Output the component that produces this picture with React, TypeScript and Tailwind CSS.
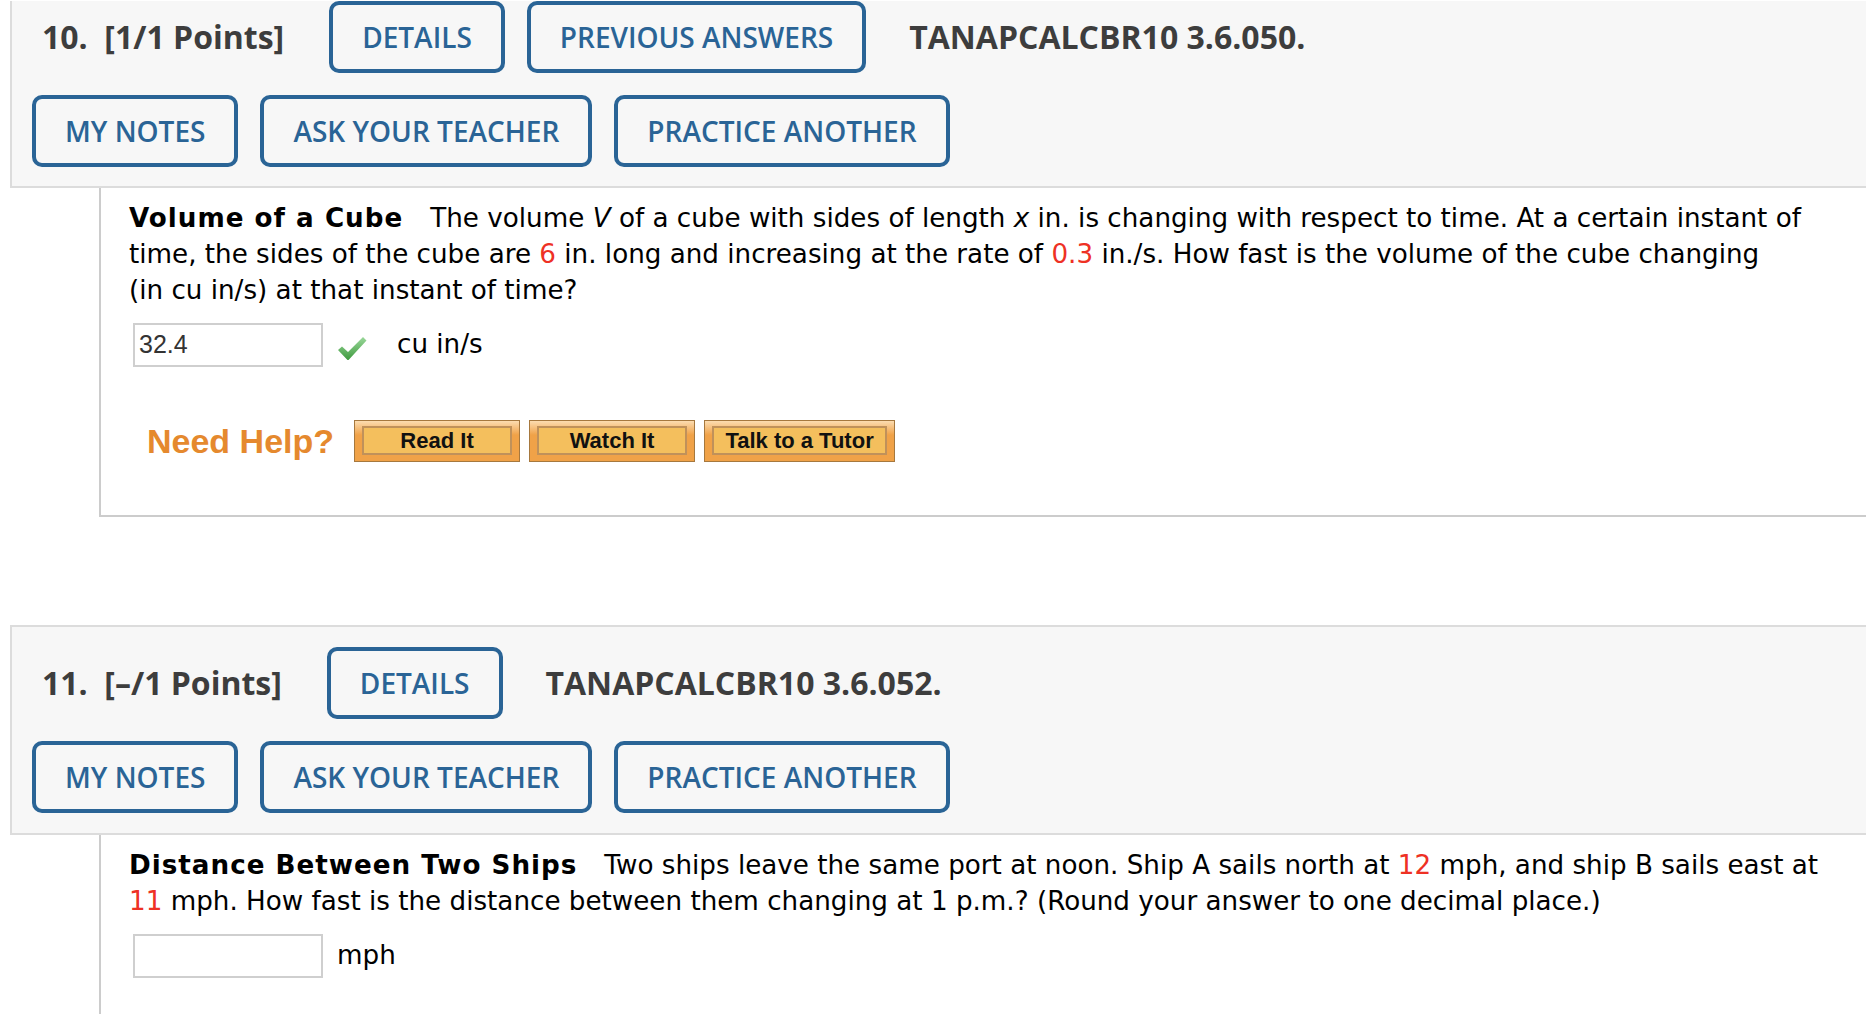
import React from "react";

const openSans = { fontFamily: '"Open Sans", "Noto Sans", sans-serif' };
const verdana = { fontFamily: '"DejaVu Sans", Verdana, sans-serif' };
const arial = { fontFamily: '"Liberation Sans", Arial, sans-serif' };

function OutlineButton({ label }: { label: string }) {
  return (
    <div className="flex h-[72px] shrink-0 items-center rounded-[10px] border-4 border-[#2a6496] px-[29px] text-[28px] font-semibold text-[#2a6496]">
      {label}
    </div>
  );
}

function HelpButton({ label, width }: { label: string; width: string }) {
  return (
    <div
      className={`${width} h-[42px] border border-[#a6783e] bg-[linear-gradient(#fcdcb0,#f0a248_35%)] px-[7px] pt-[5px] pb-[6px]`}
    >
      <div
        className="flex h-full items-center justify-center border-2 border-[#c0915a] bg-[#f4bf5d] text-[22px] font-bold text-[#111]"
        style={arial}
      >
        {label}
      </div>
    </div>
  );
}

function Check() {
  return (
    <svg width="30" height="25" viewBox="0 0 30 25">
      <defs>
        <linearGradient id="chk" x1="0" y1="0" x2="0" y2="1">
          <stop offset="0" stopColor="#9ad89a" />
          <stop offset="1" stopColor="#3f9a3f" />
        </linearGradient>
      </defs>
      <path d="M1 14 L5 10.5 L11 16 L26 1 L29.5 4.5 L12 23.5 Q11 24.5 10 23.5 Z" fill="url(#chk)" />
    </svg>
  );
}

function Header({
  num,
  points,
  code,
  prev,
  first,
}: {
  num: string;
  points: string;
  code: string;
  prev?: boolean;
  first?: boolean;
}) {
  return (
    <div
      className={
        first
          ? "ml-[10px] border-2 border-t-0 border-r-0 border-[#dcdcdc] bg-[#f7f7f7] pl-[20px] pb-[19px]"
          : "ml-[10px] border-2 border-r-0 border-[#dcdcdc] bg-[#f7f7f7] pt-[20px] pl-[20px] pb-[20px]"
      }
    >
      <div className="flex items-center">
        <div className="ml-[10px] mr-[45px] text-[32px] font-bold text-[#3d3d3d]" style={openSans}>
          {num}&nbsp;&nbsp;{points}
        </div>
        <div className="flex gap-[22px]" style={openSans}>
          <OutlineButton label="DETAILS" />
          {prev && <OutlineButton label="PREVIOUS ANSWERS" />}
        </div>
        <div className="ml-[43px] text-[32px] font-bold text-[#3d3d3d]" style={openSans}>
          {code}
        </div>
      </div>
      <div className="mt-[22px] flex gap-[22px]" style={openSans}>
        <OutlineButton label="MY NOTES" />
        <OutlineButton label="ASK YOUR TEACHER" />
        <OutlineButton label="PRACTICE ANOTHER" />
      </div>
    </div>
  );
}

const Red = ({ children }: { children: React.ReactNode }) => <span className="text-[#ee3124]">{children}</span>;

export default function App() {
  return (
    <div className="min-h-screen w-full overflow-hidden bg-white pt-px text-black">
      <Header num="10." points="[1/1 Points]" code="TANAPCALCBR10 3.6.050." prev first />

      <div className="ml-[99px] border-b-2 border-l-2 border-[#cccccc] pt-[12px] pb-[53px] pl-[28px]" style={verdana}>
        <div className="whitespace-nowrap text-[26.2px] leading-[36px]">
          <div>
            <b className="mr-[27px] tracking-[1px]">Volume of a Cube</b>The volume <i>V</i> of a cube with sides of length <i>x</i> in. is changing with respect to time. At a certain instant of
          </div>
          <div>
            time, the sides of the cube are <Red>6</Red> in. long and increasing at the rate of <Red>0.3</Red> in./s. How fast is the volume of the cube changing
          </div>
          <div>(in cu in/s) at that instant of time?</div>
        </div>
        <div className="mt-[15px] flex h-[44px] items-center text-[26.2px]">
          <div className="ml-[4px] flex h-[44px] w-[190px] items-center border-2 border-[#cfcfcf] pl-[4px] text-[25px] text-[#333]" style={arial}>
            32.4
          </div>
          <div className="ml-[14px] mt-[6px] flex">
            <Check />
          </div>
          <div className="ml-[30px]">cu in/s</div>
        </div>
        <div className="mt-[53px] flex h-[42px] items-center">
          <div className="ml-[18px] mr-[20px] text-[34px] font-bold text-[#e5892e]" style={arial}>
            Need Help?
          </div>
          <div className="flex gap-[9px]">
            <HelpButton label="Read It" width="w-[166px]" />
            <HelpButton label="Watch It" width="w-[166px]" />
            <HelpButton label="Talk to a Tutor" width="w-[191px]" />
          </div>
        </div>
      </div>

      <div className="mt-[108px]">
        <Header num="11." points="[–/1 Points]" code="TANAPCALCBR10 3.6.052." />
      </div>

      <div className="ml-[99px] min-h-[200px] border-l-2 border-[#cccccc] pt-[12px] pl-[28px]" style={verdana}>
        <div className="whitespace-nowrap text-[26.2px] leading-[36px]">
          <div>
            <b className="mr-[27px] tracking-[1px]">Distance Between Two Ships</b>Two ships leave the same port at noon. Ship A sails north at <Red>12</Red> mph, and ship B sails east at
          </div>
          <div>
            <Red>11</Red> mph. How fast is the distance between them changing at 1 p.m.? (Round your answer to one decimal place.)
          </div>
        </div>
        <div className="mt-[15px] flex items-center text-[26.2px]">
          <div className="ml-[4px] h-[44px] w-[190px] border-2 border-[#cfcfcf]" />
          <div className="ml-[14px]">mph</div>
        </div>
      </div>
    </div>
  );
}
